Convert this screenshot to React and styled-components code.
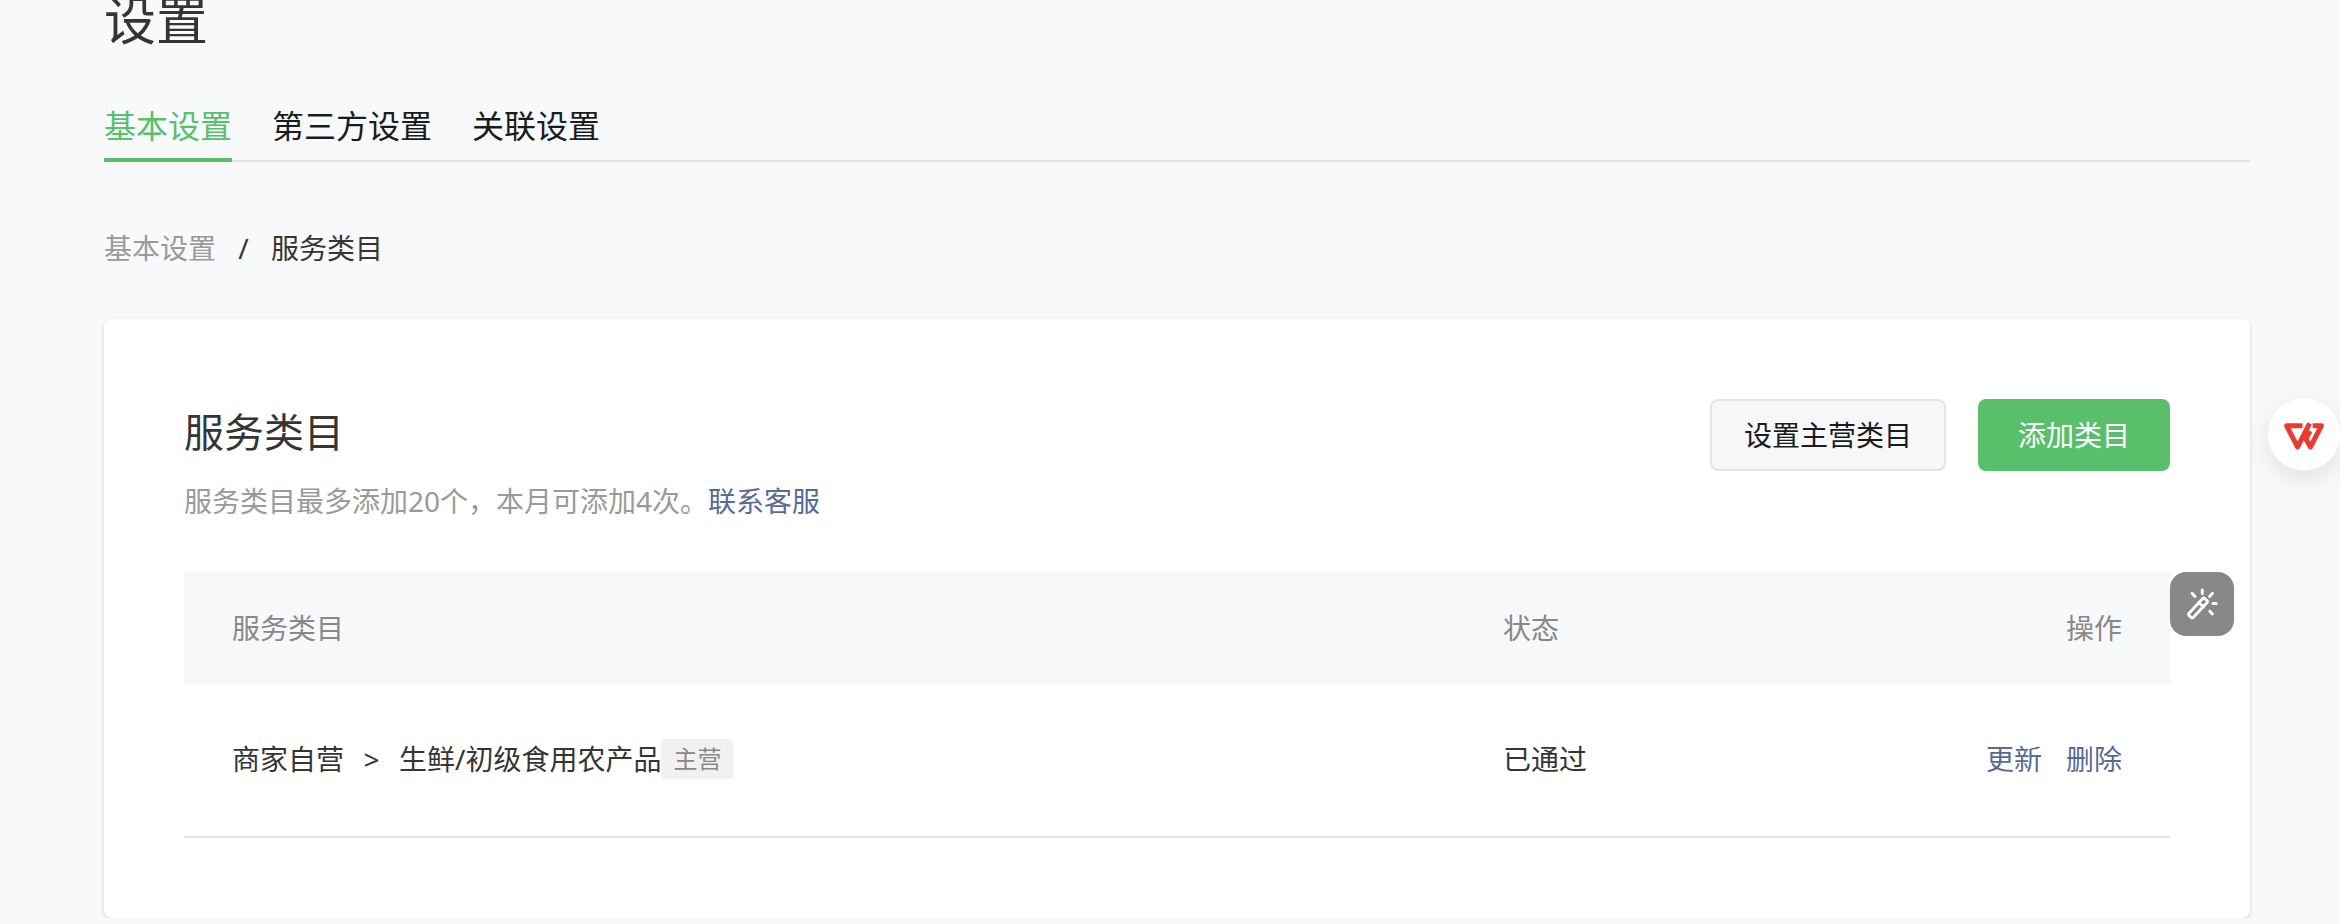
import React, { useState } from "react";
import styled, { createGlobalStyle } from "styled-components";

const TABS = ["基本设置", "第三方设置", "关联设置"];

const CATEGORIES = [
    { parent: "商家自营", name: "生鲜/初级食用农产品", primary: true, status: "已通过" }
];

const WandIcon = () => (
    <svg width="64" height="64" viewBox="0 0 64 64" fill="none" stroke="#fff" strokeWidth="3" strokeLinecap="round" strokeLinejoin="round" aria-hidden="true">
        <g transform="rotate(-47 28 36)" strokeWidth="2.8">
            <rect x="16.5" y="33" width="23" height="6" rx="1.6" />
            <path d="M32.5 33v6" />
        </g>
        <path d="M32.3 18v3.5M22.2 21.4l2.8 3M42.4 21.4l-2.8 3M43 31.5h3.2M39.8 39.2l2.6 2.8" />
    </svg>
);

const WpsIcon = () => (
    <svg width="72" height="72" viewBox="0 0 72 72" fill="none" stroke="#ea3a32" strokeWidth="5" strokeLinejoin="round" aria-hidden="true">
        <path d="M34.5 27.8H18.6L29.6 49L41.6 25.3" />
        <path d="M44.6 27.8H53.4L42.4 49L38 41L42 33" />
    </svg>
);

const App = () => {
    const [activeTab, setActiveTab] = useState(TABS[0]);

    return (
        <>
            <GlobalStyle />
            <PageStyled>
                <PageTitleStyled>设置</PageTitleStyled>
                <TabsStyled>
                    {TABS.map((tab) => (
                        <TabStyled
                            key={tab}
                            type="button"
                            $active={tab === activeTab}
                            onClick={() => setActiveTab(tab)}
                        >
                            {tab}
                        </TabStyled>
                    ))}
                </TabsStyled>
                <BreadcrumbStyled aria-label="breadcrumb">
                    <CrumbLinkStyled href="#basic">基本设置</CrumbLinkStyled>
                    <SeparatorStyled>/</SeparatorStyled>
                    <span>服务类目</span>
                </BreadcrumbStyled>
                <CardStyled>
                    <CardHeaderStyled>
                        <div>
                            <CardTitleStyled>服务类目</CardTitleStyled>
                            <HintStyled>
                                服务类目最多添加20个，本月可添加4次。<LinkStyled href="#support">联系客服</LinkStyled>
                            </HintStyled>
                        </div>
                        <ActionsStyled>
                            <ButtonStyled type="button">设置主营类目</ButtonStyled>
                            <ButtonStyled type="button" $primary>添加类目</ButtonStyled>
                        </ActionsStyled>
                    </CardHeaderStyled>
                    <TableWrapperStyled>
                        <TableStyled>
                            <thead>
                                <tr>
                                    <HeadCellStyled $width="64%">服务类目</HeadCellStyled>
                                    <HeadCellStyled>状态</HeadCellStyled>
                                    <HeadCellStyled $align="right">操作</HeadCellStyled>
                                </tr>
                            </thead>
                            <tbody>
                                {CATEGORIES.map((item) => (
                                    <tr key={item.name}>
                                        <CellStyled>
                                            <CategoryStyled>
                                                <span>{item.parent}</span>
                                                <SeparatorStyled>&gt;</SeparatorStyled>
                                                <span>{item.name}</span>
                                                {item.primary && <TagStyled>主营</TagStyled>}
                                            </CategoryStyled>
                                        </CellStyled>
                                        <CellStyled>{item.status}</CellStyled>
                                        <CellStyled>
                                            <RowActionsStyled>
                                                <LinkStyled href="#update">更新</LinkStyled>
                                                <LinkStyled href="#delete">删除</LinkStyled>
                                            </RowActionsStyled>
                                        </CellStyled>
                                    </tr>
                                ))}
                            </tbody>
                        </TableStyled>
                        <WandButtonStyled type="button" aria-label="magic">
                            <WandIcon />
                        </WandButtonStyled>
                    </TableWrapperStyled>
                </CardStyled>
            </PageStyled>
            <WpsButtonStyled type="button" aria-label="WPS">
                <WpsIcon />
            </WpsButtonStyled>
        </>
    );
};

const GlobalStyle = createGlobalStyle`
    * {
        box-sizing: border-box;
    }
    body {
        margin: 0;
        background: #f8f9fb;
        color: #353535;
        font: 28px/40px "Noto Sans", "Noto Sans CJK SC", sans-serif;
    }
    button {
        font: inherit;
        cursor: pointer;
    }
`;

const PageStyled = styled.main`
    padding: 0 90px 0 104px;
`;

const PageTitleStyled = styled.h1`
    margin: 0 0 62px;
    font-size: 52px;
    font-weight: 400;
    line-height: 40px;
`;

const TabsStyled = styled.nav`
    display: flex;
    gap: 40px;
    border-bottom: 2px solid #e1e2e4;
`;

const TabStyled = styled.button`
    margin: 0 0 -2px;
    padding: 0 0 8px;
    border: 0;
    border-bottom: 4px solid ${({ $active }) => ($active ? "#5abf6b" : "transparent")};
    background: none;
    color: ${({ $active }) => ($active ? "#5abf6b" : "#1a1b1c")};
    font-size: 32px;
    line-height: 48px;
`;

const BreadcrumbStyled = styled.nav`
    display: flex;
    margin: 66px 0 51px;
`;

const SeparatorStyled = styled.span`
    width: 55px;
    text-align: center;
`;

const LinkStyled = styled.a`
    color: #576b95;
    text-decoration: none;
`;

const CrumbLinkStyled = styled(LinkStyled)`
    color: #9a9a9a;
`;

const CardStyled = styled.section`
    padding: 80px;
    border-radius: 8px;
    background: #fff;
    box-shadow: 0 2px 4px rgba(0, 0, 0, 0.14);
`;

const CardHeaderStyled = styled.header`
    display: flex;
    align-items: flex-start;
    justify-content: space-between;
    margin-bottom: 51px;
`;

const CardTitleStyled = styled.h2`
    margin: 0 0 16px;
    font-size: 40px;
    font-weight: 400;
    line-height: 66px;
`;

const HintStyled = styled.p`
    margin: 0;
    color: #9a9a9a;
`;

const ActionsStyled = styled.div`
    display: flex;
    gap: 32px;
`;

const ButtonStyled = styled.button`
    height: 72px;
    padding: 0 ${({ $primary }) => ($primary ? "38px" : "32px")};
    border: 2px solid ${({ $primary }) => ($primary ? "#5abf6b" : "#e4e5e6")};
    border-radius: 8px;
    background: ${({ $primary }) => ($primary ? "#5abf6b" : "#f6f7f9")};
    color: ${({ $primary }) => ($primary ? "#fff" : "#1a1b1c")};
`;

const TableWrapperStyled = styled.div`
    position: relative;
`;

const TableStyled = styled.table`
    width: 100%;
    border-spacing: 0;
    table-layout: fixed;
`;

const HeadCellStyled = styled.th`
    width: ${({ $width }) => $width || "auto"};
    height: 112px;
    padding: 0 48px;
    background: #f7f8fa;
    color: #888;
    font-weight: 400;
    text-align: ${({ $align }) => $align || "left"};
`;

const CellStyled = styled.td`
    height: 154px;
    padding: 0 48px 2px;
    border-bottom: 2px solid #e4e4e9;
`;

const CategoryStyled = styled.div`
    display: flex;
    align-items: center;
`;

const TagStyled = styled.span`
    padding: 0 12px;
    border-radius: 4px;
    background: #f1f1f1;
    color: #888;
    font-size: 24px;
`;

const RowActionsStyled = styled.div`
    display: flex;
    justify-content: flex-end;
    gap: 24px;
`;

// sits right outside the table's top corner
const WandButtonStyled = styled.button`
    position: absolute;
    top: 0;
    left: 100%;
    display: flex;
    padding: 0;
    border: 0;
    border-radius: 16px;
    background: #888;
`;

const WpsButtonStyled = styled.button`
    position: fixed;
    top: 398px;
    right: 0;
    display: flex;
    padding: 0;
    border: 0;
    border-radius: 50%;
    background: #fff;
    box-shadow: 0 0 0 1px #f2f2f3, 0 8px 24px rgba(0, 0, 0, 0.1);
`;

export default App;
